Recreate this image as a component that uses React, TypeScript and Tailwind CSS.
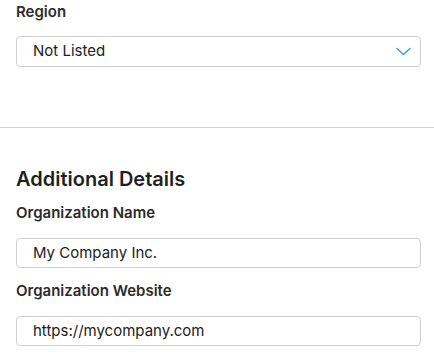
import React from 'react';

const Chevron = () => (
    <svg className="w-[15px] h-[9px] text-[#4b9fd6]" viewBox="0 0 15 9" fill="none" stroke="currentColor">
        <path d="M1 1.5l6.5 6 6.5-6" strokeWidth={1.6} strokeLinecap="round" strokeLinejoin="round" />
    </svg>
);

const Field = ({ label, value }: { label: string; value: string }) => (
    <div>
        <label className="block text-[15px] leading-[20px] font-semibold text-[#2b2b2b]">{label}</label>
        <div className="mt-[15px] h-[30px] flex items-center pl-4 border border-[#d0d0d0] rounded-[4px] text-[15px] text-[#222]">
            {value}
        </div>
    </div>
);

export default function App() {
    return (
        <div className="w-[434px] h-[357px] bg-white overflow-hidden" style={{ fontFamily: 'Inter, "Noto Sans", sans-serif' }}>
            {/* Region */}
            <div className="pl-4 pr-[13px] pt-[2px] pb-[60px]">
                <label className="block text-[15px] leading-[20px] font-semibold text-[#2b2b2b]">Region</label>
                <div className="mt-[14px] h-[31px] flex items-center justify-between pl-4 pr-[9px] border border-[#d0d0d0] rounded-[4px] text-[15px] text-[#222]">
                    <span>Not Listed</span>
                    <Chevron />
                </div>
            </div>

            <div className="border-t border-[#d4d4d4]" />

            {/* Additional Details */}
            <div className="pl-4 pr-[13px] pt-[37px]">
                <h2 className="text-[20px] leading-[28px] font-semibold text-[#1f1f1f]">Additional Details</h2>
                <div className="mt-[10px] flex flex-col gap-[13px]">
                    <Field label="Organization Name" value="My Company Inc." />
                    <Field label="Organization Website" value="https://mycompany.com" />
                </div>
            </div>
        </div>
    );
}
